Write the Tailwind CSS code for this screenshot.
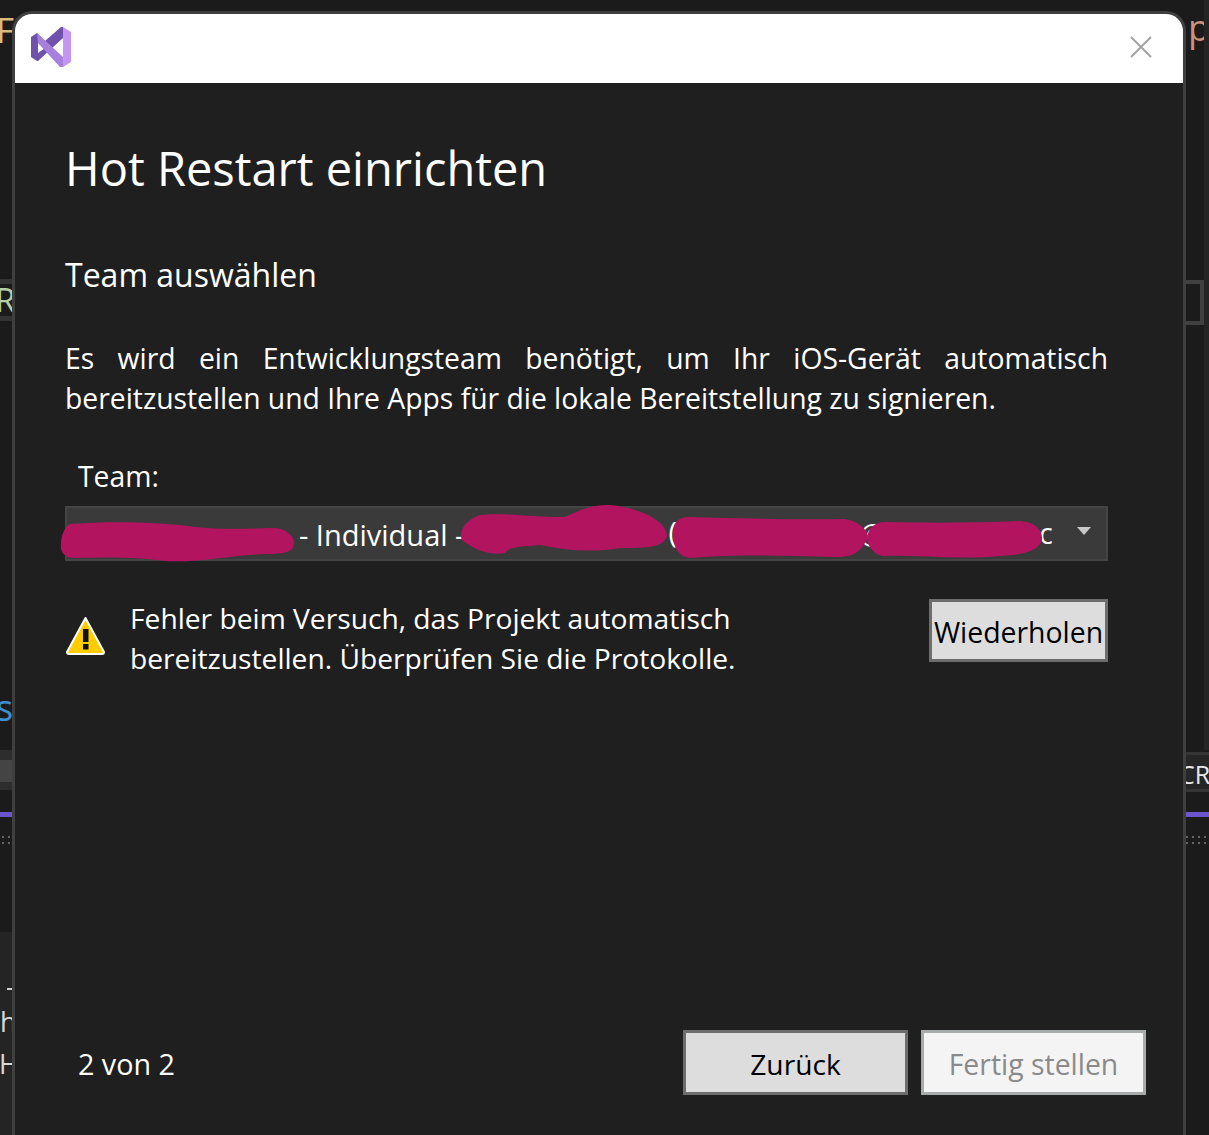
<!DOCTYPE html>
<html lang="de">
<head>
  <meta charset="UTF-8" />
  <title>Hot Restart einrichten</title>
  <script src="https://cdn.jsdelivr.net/npm/@tailwindcss/browser@4"></script>
</head>
<body class="relative w-[1209px] h-[1135px] overflow-hidden bg-[#1b1b1b] font-['Open_Sans','Noto_Sans',sans-serif]">

  <!-- IDE behind the dialog -->
  <div class="absolute left-[-4px] top-[10px] text-[35px] leading-[40px] text-[#d7ba7d]">F</div>
  <div class="absolute left-[1188px] top-[8px] text-[36px] leading-[40px] text-[#ce9178]">p</div>
  <div class="absolute left-0 top-[279px] w-[14px] h-[42px] border-y-[5px] border-[#333333]"></div>
  <div class="absolute left-[-5px] top-[282px] text-[33px] leading-[36px] text-[#b5cea8]">R</div>
  <div class="absolute left-[1184px] top-[280px] w-[20px] h-[45px] border-[4px] border-l-0 border-[#404040]"></div>
  <div class="absolute left-[1204px] top-0 w-[5px] h-[750px] bg-[#242424]"></div>
  <div class="absolute left-[-4px] top-[688px] text-[36px] leading-[40px] text-[#3f8fd0]">s</div>
  <div class="absolute left-0 top-[750px] w-[14px] h-[40px] bg-[#2d2d2d]"></div>
  <div class="absolute left-0 top-[760px] w-[14px] h-[22px] bg-[#444444]"></div>
  <div class="absolute left-[1184px] top-[752px] w-[25px] h-[40px] border-y-[3px] border-[#353535] bg-[#262626]"></div>
  <div class="absolute left-[1179px] top-[756px] text-[25px] leading-[36px] text-[#e8e8e8]">CR</div>
  <div class="absolute left-0 top-[812px] w-[14px] h-[5px] bg-[#6a55cc]"></div>
  <div class="absolute left-[1184px] top-[812px] w-[25px] h-[5px] bg-[#6a55cc]"></div>
  <div class="absolute left-0 top-[834px] w-[14px] h-[12px] bg-[radial-gradient(#666666_1px,transparent_1px)] bg-[length:6px_6px]"></div>
  <div class="absolute left-[1184px] top-[834px] w-[25px] h-[12px] bg-[radial-gradient(#666666_1px,transparent_1px)] bg-[length:6px_6px]"></div>
  <div class="absolute left-0 top-[932px] w-[14px] h-[203px] bg-[#242424]"></div>
  <div class="absolute left-[7px] top-[988px] w-[7px] h-[2px] bg-[#d0d0d0]"></div>
  <div class="absolute left-0 top-[1004px] text-[27px] leading-[36px] text-[#d8d8d8]">h</div>
  <div class="absolute left-[-1px] top-[1046px] text-[27px] leading-[36px] text-[#d8d8d8]">H</div>

  <!-- dialog -->
  <div class="relative ml-[12px] mt-[11px] w-[1174px] h-[1124px] flex flex-col border-[3px] border-b-0 border-[#3f3f3f] rounded-t-[20px] bg-[#1f1f1f] overflow-hidden">
    <div class="h-[69px] shrink-0 bg-white flex items-center justify-between pl-[16px] pr-[31px]">
      <svg width="40" height="40" viewBox="0 0 40 40" class="mt-[-3px] blur-[0.5px]">
        <path d="M0 10 L6 6 L14 14 L30 0 H32 V11 L7 34 H6 L0 30Z M7 16 V26 L14 21Z" fill="#6f52ac" fill-rule="evenodd"/>
        <path d="M6 6 L32 30 V40 H29 L7 16Z" fill="#a77fdc"/>
        <path d="M32 0 L40 5 V35 L32 40Z" fill="#c595f2"/>
      </svg>
      <svg width="22" height="22" viewBox="0 0 22 22" class="mt-[-3px]">
        <path d="M1 1 L21 21 M21 1 L1 21" stroke="#a3a3a3" stroke-width="2" fill="none"/>
      </svg>
    </div>

    <div class="flex-1 flex flex-col pl-[50px] pr-[37px] relative">
      <h1 class="mt-[49px] text-[47px] leading-[72px] text-white">Hot Restart einrichten</h1>
      <h2 class="mt-[49px] text-[32px] leading-[44px] text-white">Team auswählen</h2>

      <div class="w-[1043px]">
        <p class="mt-[41px] text-[28.3px] leading-[40px] text-white text-justify">Es wird ein Entwicklungsteam benötigt, um Ihr iOS-Gerät automatisch bereitzustellen und Ihre Apps für die lokale Bereitstellung zu signieren.</p>

        <label class="block mt-[38px] ml-[13px] text-[28.3px] leading-[40px] text-white">Team:</label>

        <div class="relative mt-[10px] h-[55px] bg-[#3a3a3a] border-[2px] border-[#454545] flex items-center text-[28.3px] text-white">
          <span class="ml-[232px] mt-[2px] text-[29px]">- Individual -</span>
          <span class="ml-[204px] mt-[-2px]">(</span>
          <span class="ml-[183px] mt-[2px]">@</span>
          <span class="ml-[154px]">c</span>
          <svg width="14" height="8" viewBox="0 0 14 8" class="absolute right-[15px] top-[19px]"><path d="M0 0H14L7 8Z" fill="#c8c8c8"/></svg>
        </div>

        <div class="mt-[38px] flex justify-between items-start">
          <div class="flex items-center mt-[-1px]">
            <svg width="41" height="40" viewBox="0 0 41 40" class="mt-[-4px] shrink-0">
              <path d="M20.5 2 L39 36 Q39 38 37 38 H4 Q2 38 2 36Z" fill="#ffcc00" stroke="#ffffff" stroke-width="2" stroke-linejoin="round"/>
              <rect x="18" y="13" width="5.5" height="13" fill="#111111"/>
              <rect x="18" y="28" width="5.5" height="5.5" fill="#111111"/>
            </svg>
            <p class="ml-[24px] text-[28.2px] leading-[40px] text-white">Fehler beim Versuch, das Projekt automatisch<br />bereitzustellen. Überprüfen Sie die Protokolle.</p>
          </div>
          <button class="w-[179px] h-[63px] pt-[3px] bg-[#dddddd] border-[3px] border-[#6d6d6d] text-[28.4px] text-black whitespace-nowrap">Wiederholen</button>
        </div>
      </div>

      <div class="mt-auto mb-[40px] flex items-center justify-between ml-[13px]">
        <span class="text-[28.7px] text-white pt-[3px]">2 von 2</span>
        <div class="flex gap-[13px]">
          <button class="w-[225px] h-[65px] pt-[3px] bg-[#dddddd] border-[3px] border-[#6d6d6d] text-[28.2px] text-black">Zurück</button>
          <button class="w-[225px] h-[65px] pt-[3px] bg-[#f4f4f4] border-[3px] border-[#a7abab] text-[28.4px] text-[#8a8a8a]">Fertig stellen</button>
        </div>
      </div>
    </div>
  </div>

  <!-- redaction scribbles -->
  <svg width="1209" height="1135" viewBox="0 0 1209 1135" class="absolute left-0 top-0 pointer-events-none">
    <g fill="#b3145f">
      <path d="M70 524 C110 521 150 522 180 525 C210 530 240 529 270 528 C285 527 294 535 294 543 C294 552 285 554 265 554 C230 555 200 563 165 561 C130 556 100 558 75 558 C62 558 60 550 61 542 C62 532 66 526 70 524Z"/>
      <path d="M480 515 C505 512 540 518 565 517 C580 510 590 505 610 505 C640 508 665 520 667 535 C665 548 645 548 620 548 C590 553 565 550 540 545 C520 547 510 546 505 553 C490 556 475 550 462 540 C458 532 465 520 480 515Z"/>
      <path d="M690 517 C730 518 790 520 845 519 C860 522 868 530 868 538 C860 552 855 557 835 557 C790 556 740 554 690 558 C678 556 674 548 673 535 C673 522 678 517 690 517Z"/>
      <path d="M885 522 C930 523 980 523 1020 521 C1035 522 1043 530 1042 540 C1038 552 1020 555 1000 556 C960 560 920 555 885 556 C875 556 868 548 867 538 C868 528 875 522 885 522Z"/>
    </g>
  </svg>
</body>
</html>
